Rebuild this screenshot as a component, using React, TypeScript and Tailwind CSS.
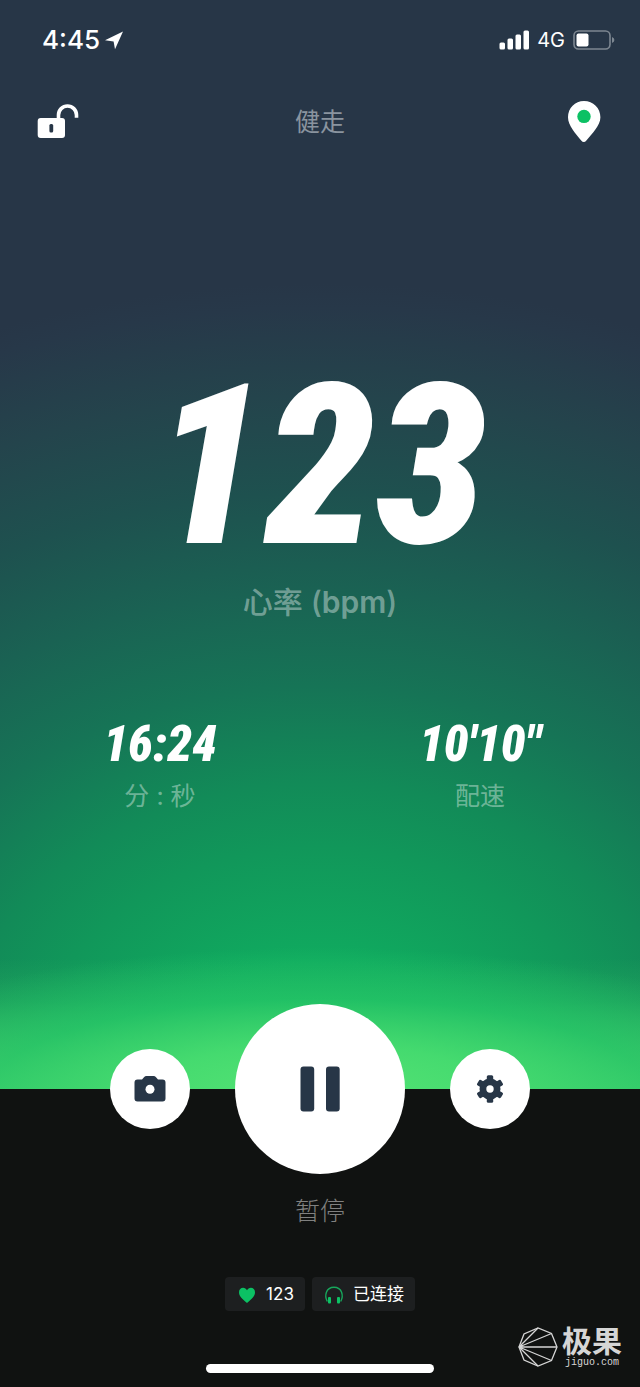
import type { ReactNode } from 'react';

const digits =
  "font-['Roboto_Condensed',Roboto,'Noto_Sans_CJK_SC',sans-serif] font-black italic";

function StatusBar() {
  return (
    <div className="flex h-20 items-center justify-between pl-[42px] pr-[25px]">
      <div className="flex items-center gap-1">
        <span className="text-[26px] leading-8 font-medium">4:45</span>
        <svg className="h-5 w-5" viewBox="0 0 20 20" fill="currentColor" aria-hidden="true">
          <path d="M19 1.5 11 19.3 9.6 11.4 1 10.2Z" />
        </svg>
      </div>
      <div className="flex items-center gap-2">
        <svg className="h-5 w-[30px]" viewBox="0 0 30 20" fill="currentColor" aria-hidden="true">
          <rect x="0.5" y="12.5" width="5.5" height="7" rx="1.5" />
          <rect x="8.5" y="8.5" width="5.5" height="11" rx="1.5" />
          <rect x="16.5" y="4.5" width="5.5" height="15" rx="1.5" />
          <rect x="24.5" y="0.5" width="5.5" height="19" rx="1.5" />
        </svg>
        <span className="text-xl leading-8">4G</span>
        <svg className="h-5 w-[42px]" viewBox="0 0 42 20" fill="none" aria-hidden="true">
          <rect x="1" y="1" width="36" height="18" rx="4.5" stroke="#7d8791" strokeWidth="1.6" />
          <path d="M39 7q2.4 1 2.4 3T39 13z" fill="#7d8791" />
          <rect x="3.5" y="3.5" width="12" height="13" rx="2" fill="#fff" />
        </svg>
      </div>
    </div>
  );
}

function Header() {
  return (
    <header className="flex h-[84px] items-center justify-between px-9">
      <button type="button" aria-label="解锁">
        <svg className="h-9 w-11" viewBox="0 0 44 36" fill="none" aria-hidden="true">
          <path d="M22.5 14V11a9 9 0 0 1 18 0v2.8" stroke="#fff" strokeWidth="3.6" />
          <rect x="1.7" y="14" width="27.3" height="20" rx="3" fill="#fff" />
          <rect x="13.4" y="20" width="3.8" height="8.4" rx="1.5" fill="#273647" />
        </svg>
      </button>
      <h1 className="text-[25px] leading-9 text-[#8a949f]">健走</h1>
      <button type="button" aria-label="地图" className="pl-2">
        <svg className="h-[42px] w-9" viewBox="-1 0 36 42" fill="none" aria-hidden="true">
          <path
            d="M15 0C6 0-1 7.200-1 16.200c0 8.600 7.900 16.500 13.200 23.200q2.600 3 5.200 0C22.700 32.700 31.400 24.800 31.400 16.200c0-9-7.200-16.200-16.400-16.200Z"
            fill="#fff"
          />
          <circle cx="15" cy="15.4" r="6.7" fill="#0cc164" />
        </svg>
      </button>
    </header>
  );
}

function Stat({ value, label }: { value: string; label: string }) {
  return (
    <div className="flex flex-col items-center">
      <span className={`${digits} text-[50px] leading-[56px]`}>{value}</span>
      <span className="mt-1 text-[25px] leading-10 text-white/40">{label}</span>
    </div>
  );
}

function RoundButton({ label, children }: { label: string; children: ReactNode }) {
  return (
    <button
      type="button"
      aria-label={label}
      className="flex size-20 items-center justify-center rounded-full bg-white"
    >
      {children}
    </button>
  );
}

function Chip({ icon, text }: { icon: ReactNode; text: string }) {
  return (
    <div className="flex h-[34px] items-center gap-2 rounded bg-[#1d1f20] px-[11px] pt-px text-[17px] text-white">
      {icon}
      <span>{text}</span>
    </div>
  );
}

function Watermark() {
  return (
    <div className="absolute right-[18px] bottom-[18px] flex items-center gap-1 text-[#d5d5d5]">
      <svg className="size-10" viewBox="0 0 40 40" fill="none" stroke="currentColor" strokeWidth="1.3" aria-hidden="true">
        <path d="M1 20 6 7 20 1 33.5 6.5 39 20 33.5 33.5 20 39 6 33Z" />
        <path d="M1 20 20 1M1 20 33.5 6.5M1 20H39M1 20 33.5 33.5M1 20 20 39" />
      </svg>
      <div className="flex flex-col items-center">
        <span className="text-[30px] leading-8 font-bold">极果</span>
        <span className="font-['Liberation_Mono',monospace] text-[10px] leading-3">jiguo.com</span>
      </div>
    </div>
  );
}

export default function App() {
  return (
    <div className="relative flex min-h-screen flex-col bg-[#101211] font-[Inter,'Noto_Sans_CJK_SC',sans-serif] text-white">
      <main className="flex-1 bg-[radial-gradient(80%_13%_at_50%_100%,#54e274_0%,#46de70e0_32%,#24cc68a0_64%,#12b46200_100%),linear-gradient(to_top,#4ecc6e_0%,#40c068d0_4%,#28ac6080_8%,#20a05f00_12%),radial-gradient(153%_74%_at_50%_100%,#10b060_0%,#10aa5f_16%,#11975a_30%,#128b58_38%,#167456_50%,#1a6253_62%,#1e514f_74%,#24444c_86%,#273849_97%,#273647_100%)] pb-[273px]">
        <StatusBar />
        <Header />
        <section className="flex flex-col items-center pt-[188px]">
          <span className={`${digits} text-[224px] leading-[230px]`}>123</span>
          <h2 className="text-[30px] leading-10 font-semibold text-white/40">
            <span className="font-medium">心率 (</span>bpm<span className="font-medium">)</span>
          </h2>
        </section>
        <section className="grid grid-cols-2 pt-[94px]">
          <Stat value="16:24" label="分 : 秒" />
          <Stat value="10′10″" label="配速" />
        </section>
      </main>
      <footer className="flex flex-col items-center pb-[14px]">
        <div className="-mt-[85px] flex items-center gap-[45px]">
          <RoundButton label="拍照">
            <svg className="h-7 w-8" viewBox="0 0 32 28" aria-hidden="true">
              <path
                d="M3.5 4.5H8l2-2.3Q11 1 12.5 1h7Q21 1 22 2.2l2 2.3h4.5Q31.500 4.500 31.500 7.500v16q0 3-3 3H3.500q-3 0-3-3v-16q0-3 3-3Z"
                fill="#273647"
              />
              <circle cx="16" cy="14.3" r="4.5" fill="#fff" />
            </svg>
          </RoundButton>
          <button
            type="button"
            aria-label="暂停"
            className="flex size-[170px] items-center justify-center rounded-full bg-white"
          >
            <svg className="h-[46px] w-10" viewBox="0 0 40 46" fill="#273647" aria-hidden="true">
              <rect x="0.5" y="0.5" width="13.7" height="45" rx="3" />
              <rect x="26" y="0.5" width="13.7" height="45" rx="3" />
            </svg>
          </button>
          <RoundButton label="设置">
            <svg className="size-7" viewBox="0 0 28 28" aria-hidden="true">
              <g fill="#273647">
                <circle cx="14" cy="14" r="10.5" />
                <rect x="10.8" y="0.2" width="6.4" height="27.6" rx="1.5" />
                <rect x="10.8" y="0.2" width="6.4" height="27.6" rx="1.5" transform="rotate(60 14 14)" />
                <rect x="10.8" y="0.2" width="6.4" height="27.6" rx="1.5" transform="rotate(120 14 14)" />
              </g>
              <circle cx="14" cy="14" r="3.7" fill="#fff" />
            </svg>
          </RoundButton>
        </div>
        <span className="mt-[17px] text-[25px] leading-10 font-light text-[#808180]">暂停</span>
        <div className="mt-[46px] flex gap-[7px]">
          <Chip
            icon={
              <svg className="h-[18px] w-[22px]" viewBox="0 0 22 18" fill="#0cc164" aria-hidden="true">
                <path d="M11 17C6 12.800 3 10 3 6.200 3 3.500 4.900 1.800 7.100 1.800c1.700 0 3.100 1 3.900 2.500.8-1.500 2.200-2.500 3.900-2.500C17.100 1.800 19 3.500 19 6.200 19 10 16 12.800 11 17Z" />
              </svg>
            }
            text="123"
          />
          <Chip
            icon={
              <svg className="h-[18px] w-[22px]" viewBox="0 0 22 18" fill="none" aria-hidden="true">
                <path d="M4.3 15.500C1.200 10 2.800 1.300 11 1.300s9.800 8.700 6.700 14.200" stroke="#17a85c" strokeWidth="1.4" />
                <rect x="5" y="11" width="3" height="6.5" rx="1" fill="#0cc164" />
                <rect x="14" y="11" width="3" height="6.5" rx="1" fill="#0cc164" />
              </svg>
            }
            text="已连接"
          />
        </div>
        <div className="mt-[53px] h-[9px] w-[228px] rounded-full bg-white" />
      </footer>
      <Watermark />
    </div>
  );
}
